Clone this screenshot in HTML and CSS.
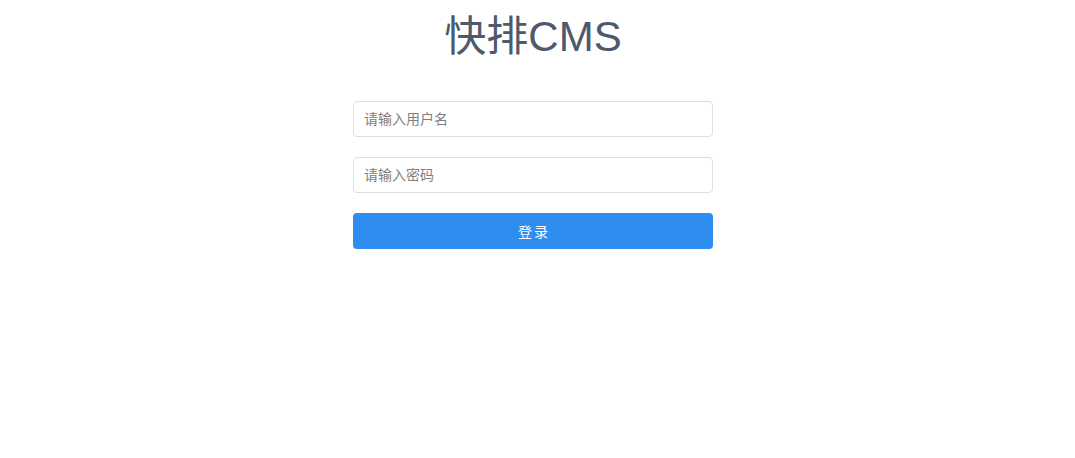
FILE: index.html
```html
<!DOCTYPE html>
<html>
<head>
    <title>快排CMS</title>
    <link rel="stylesheet" href="styles.css">
</head>
<body>
    <div class="login">
        <h2 class="title">快排CMS</h2>

        <div class="form-group">
            <input type="text" placeholder="请输入用户名">
        </div>
        <div class="form-group">
            <input type="password" placeholder="请输入密码">
        </div>
        <button>登录</button>
    </div>
</body>
</html>
```

FILE: styles.css
```css
body {
    font-family: "Liberation Sans", Arial, "Noto Sans CJK SC", sans-serif;
    margin: 0;
    padding: 0 9px 0 0;
    background-color: #fff;
}
.login {
    width: 360px;
    margin: 0 auto;
}
.title {
    margin: 12px 0 0;
    height: 89px;
    font-size: 42px;
    font-weight: normal;
    line-height: 50px;
    text-align: center;
    color: #4e5a6c;
}
.form-group {
    margin-bottom: 20px;
}
input {
    width: 100%;
    height: 36px;
    padding: 0 10px;
    border: 1px solid #dcdfe6;
    border-radius: 4px;
    box-sizing: border-box;
    font-family: inherit;
    font-size: 14px;
    color: #555;
    outline: none;
}
input::placeholder {
    color: #808080;
}
button {
    display: block;
    width: 100%;
    height: 36px;
    background-color: #2e8ef0;
    color: white;
    border: none;
    border-radius: 4px;
    font-family: inherit;
    font-size: 14px;
    letter-spacing: 2px;
    text-indent: 2px;
    cursor: pointer;
}
```
